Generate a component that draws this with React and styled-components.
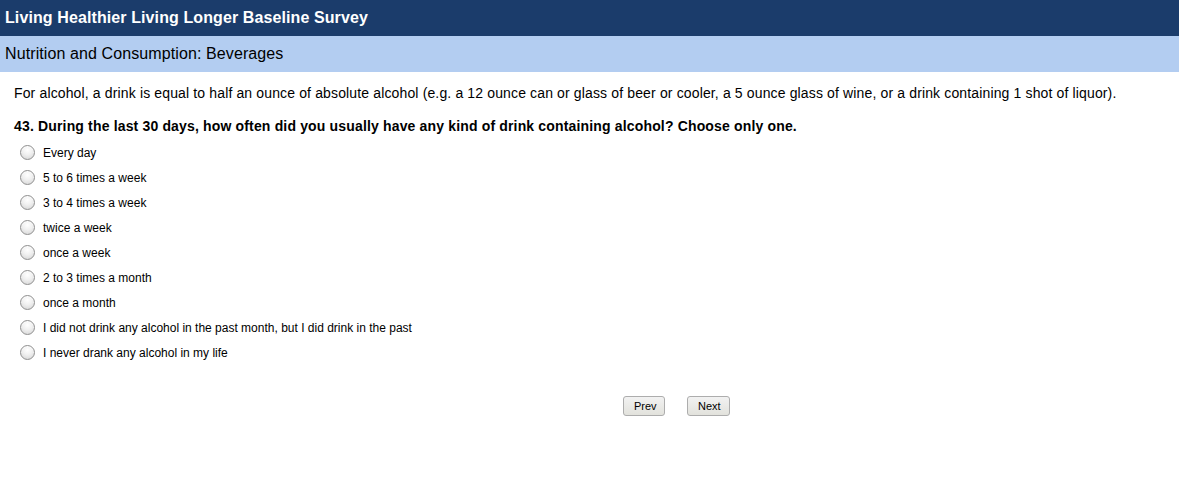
import styled, { createGlobalStyle } from 'styled-components';

const GlobalStyle = createGlobalStyle`
    body {
        margin: 0;
        background: #fff;
        font-family: Arial, "Liberation Sans", sans-serif;
        color: #000;
    }
`;

const TitleBar = styled('div')`
    height: 36px;
    background: #1b3c6b;
    color: #fff;
    font-weight: bold;
    font-size: 16px;
    letter-spacing: 0.1px;
    display: flex;
    align-items: center;
    padding-left: 5px;
`;

const SectionBar = styled('div')`
    height: 36px;
    background: #b3cdf1;
    color: #000;
    font-size: 16px;
    letter-spacing: 0.1px;
    display: flex;
    align-items: center;
    padding-left: 5px;
`;

const Body = styled('div')`
    padding: 12px 14px 0 14px;
`;

const Intro = styled('p')`
    margin: 0;
    font-size: 14px;
    line-height: 18px;
    letter-spacing: 0.14px;
`;

const Question = styled('p')`
    margin: 15px 0 5px 0;
    font-size: 14px;
    font-weight: bold;
    line-height: 18px;
    letter-spacing: 0.16px;
`;

const Options = styled('div')`
    display: flex;
    flex-direction: column;
    padding-left: 6px;
`;

const Option = styled('label')`
    display: flex;
    align-items: center;
    height: 25px;
    font-size: 12px;
    gap: 8px;
`;

const Radio = styled('span')`
    width: 13px;
    height: 13px;
    border-radius: 50%;
    border: 1px solid #8f8f8f;
    background: radial-gradient(circle at 50% 30%, #ffffff 0%, #f0f0f0 45%, #d2d2d2 100%);
    box-shadow: inset 0 1px 1px rgba(255, 255, 255, 0.8);
`;

const Nav = styled('div')`
    display: flex;
    gap: 22px;
    margin: 31px 0 0 609px;
`;

const Button = styled('button')`
    height: 20px;
    padding: 0 10px;
    font-family: Arial, "Liberation Sans", sans-serif;
    font-size: 11px;
    color: #000;
    border: 1px solid #adadad;
    border-radius: 3px;
    background: linear-gradient(#f2f2f2, #e2e2dc);
    width: ${(p) => p.w}px;
`;

const options = [
    'Every day',
    '5 to 6 times a week',
    '3 to 4 times a week',
    'twice a week',
    'once a week',
    '2 to 3 times a month',
    'once a month',
    'I did not drink any alcohol in the past month, but I did drink in the past',
    'I never drank any alcohol in my life',
];

export default function App() {
    return (
        <>
            <GlobalStyle />
            <TitleBar>Living Healthier Living Longer Baseline Survey</TitleBar>
            <SectionBar>Nutrition and Consumption: Beverages</SectionBar>
            <Body>
                <Intro>
                    For alcohol, a drink is equal to half an ounce of absolute alcohol (e.g. a 12 ounce can or glass of beer or cooler, a 5 ounce glass of wine, or a drink containing 1 shot of liquor).
                </Intro>
                <Question>
                    43. During the last 30 days, how often did you usually have any kind of drink containing alcohol? Choose only one.
                </Question>
                <Options>
                    {options.map((o) => (
                        <Option key={o}>
                            <Radio />
                            {o}
                        </Option>
                    ))}
                </Options>
                <Nav>
                    <Button w={42}>Prev</Button>
                    <Button w={43}>Next</Button>
                </Nav>
            </Body>
        </>
    );
}
